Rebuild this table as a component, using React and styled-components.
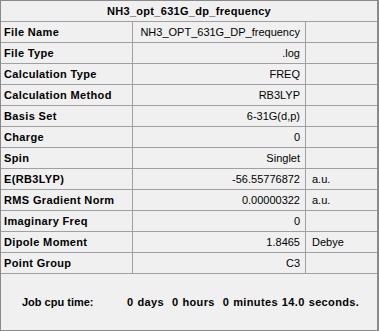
import React from "react";
import styled, { createGlobalStyle } from "styled-components";

const Global = createGlobalStyle`
  html, body { margin: 0; padding: 0; background: #f0f0f0; }
  body { font-family: "Liberation Sans", Arial, sans-serif; }
`;

const Panel = styled.div`
  width: 379px;
  height: 331px;
  box-sizing: border-box;
  background: #f0f0f0;
  border: 1px solid #8a8a8a;
  border-right-width: 2px;
  display: flex;
  flex-direction: column;
  color: #000;
`;

const Title = styled.div`
  height: 20px;
  border-bottom: 1px solid #a0a0a0;
  display: flex;
  align-items: center;
  justify-content: center;
  font-weight: bold;
  font-size: 11px;
  letter-spacing: 0.3px;
`;

const Grid = styled.div`
  display: grid;
  grid-template-columns: 132px 173px 1fr;
  grid-auto-rows: 21px;
`;

const Cell = styled.div`
  box-sizing: border-box;
  border-bottom: 1px solid #a0a0a0;
  border-right: ${(p) => (p.$last ? "none" : "1px solid #a0a0a0")};
  display: flex;
  align-items: center;
  font-size: 11px;
  white-space: nowrap;
  overflow: hidden;
`;

const Label = styled(Cell)`
  padding-left: 3px;
  font-weight: bold;
  letter-spacing: 0.35px;
`;

const Value = styled(Cell)`
  justify-content: flex-end;
  padding-right: 5px;
`;

const Unit = styled(Cell)`
  padding-left: 6px;
`;

const Footer = styled.div`
  flex: 1;
  display: flex;
  align-items: center;
  font-weight: bold;
  font-size: 11px;
  white-space: pre;
`;

const FooterLabel = styled.span`
  box-sizing: border-box;
  width: 126px;
  padding-left: 21px;
`;

const FooterValue = styled.span`
  letter-spacing: 0.35px;
  word-spacing: 0.6px;
`;

const rows = [
  ["File Name", "NH3_OPT_631G_DP_frequency", ""],
  ["File Type", ".log", ""],
  ["Calculation Type", "FREQ", ""],
  ["Calculation Method", "RB3LYP", ""],
  ["Basis Set", "6-31G(d,p)", ""],
  ["Charge", "0", ""],
  ["Spin", "Singlet", ""],
  ["E(RB3LYP)", "-56.55776872", "a.u."],
  ["RMS Gradient Norm", "0.00000322", "a.u."],
  ["Imaginary Freq", "0", ""],
  ["Dipole Moment", "1.8465", "Debye"],
  ["Point Group", "C3", ""],
];

export default function App() {
  return (
    <>
      <Global />
      <Panel>
        <Title>NH3_opt_631G_dp_frequency</Title>
        <Grid>
          {rows.map(([label, value, unit]) => (
            <React.Fragment key={label}>
              <Label>{label}</Label>
              <Value>{value}</Value>
              <Unit $last>{unit}</Unit>
            </React.Fragment>
          ))}
        </Grid>
        <Footer>
          <FooterLabel>Job cpu time:</FooterLabel>
          <FooterValue>{"0 days  0 hours  0 minutes 14.0 seconds."}</FooterValue>
        </Footer>
      </Panel>
    </>
  );
}
